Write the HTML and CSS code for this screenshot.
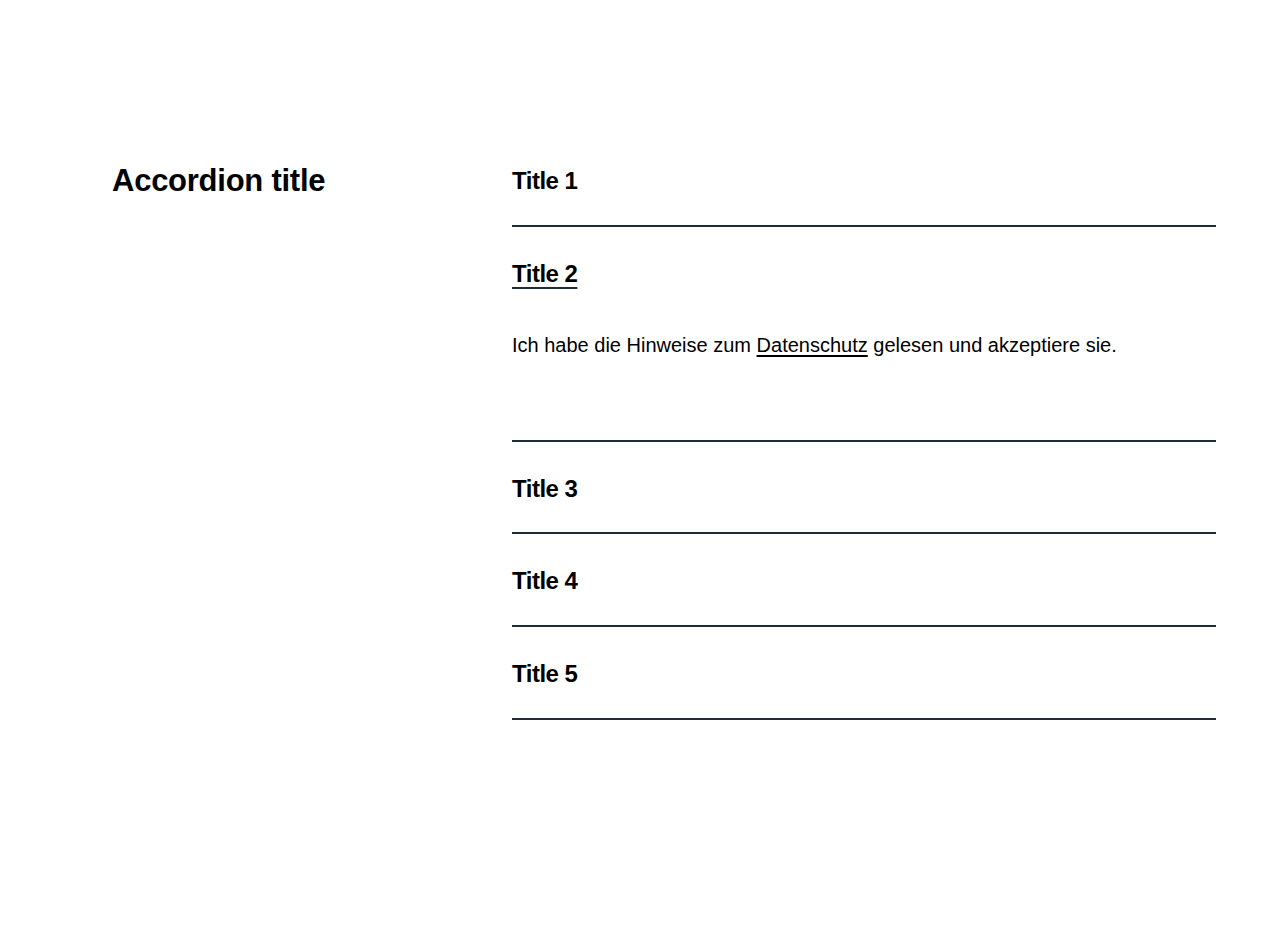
FILE: index.html
```html
<!DOCTYPE html>
<html lang="de">
<head>
<meta charset="utf-8">
<title>Accordion</title>
<link rel="stylesheet" href="styles.css">
</head>
<body>
<main class="page">
  <h2 class="section-title">Accordion title</h2>
  <div class="accordion">
    <div class="item">
      <div class="item-header"><span class="item-title">Title 1</span></div>
    </div>
    <div class="item open">
      <div class="item-header"><span class="item-title">Title 2</span></div>
      <div class="item-body">
        <p>Ich habe die Hinweise zum <a href="#" class="link">Datenschutz</a> gelesen und akzeptiere sie.</p>
      </div>
    </div>
    <div class="item">
      <div class="item-header"><span class="item-title">Title 3</span></div>
    </div>
    <div class="item">
      <div class="item-header"><span class="item-title">Title 4</span></div>
    </div>
    <div class="item">
      <div class="item-header"><span class="item-title">Title 5</span></div>
    </div>
  </div>
</main>
</body>
</html>
```
FILE: styles.css
```css
html, body {
  margin: 0;
  padding: 0;
  background: #ffffff;
}

body {
  font-family: "Liberation Sans", Arial, sans-serif;
  color: #000000;
}

.page {
  display: grid;
  grid-template-columns: 400px 704px;
  padding: 134px 64px 0 112px;
  align-items: start;
}

.section-title {
  margin: 31px 0 0 0;
  font-size: 31px;
  line-height: 31px;
  font-weight: 700;
  letter-spacing: -0.25px;
  color: #000;
}

.accordion {
  display: flex;
  flex-direction: column;
}

.item {
  border-bottom: 2px solid #1f2c39;
}

.item-header {
  padding: 35px 0 31.67px 0;
  font-size: 24px;
  line-height: 24px;
  font-weight: 700;
  letter-spacing: -0.5px;
  color: #000;
}

.open .item-title {
  text-decoration: underline;
  text-decoration-color: #1f2c39;
  text-decoration-thickness: 2px;
  text-underline-offset: 5px;
}

.item-body {
  padding: 13px 0 79.26px 0;
}

.item-body p {
  margin: 0;
  font-size: 20px;
  line-height: 30px;
  color: #000;
}

.link {
  color: #000;
  text-decoration: underline;
  text-decoration-thickness: 2px;
  text-underline-offset: 3px;
}
```
